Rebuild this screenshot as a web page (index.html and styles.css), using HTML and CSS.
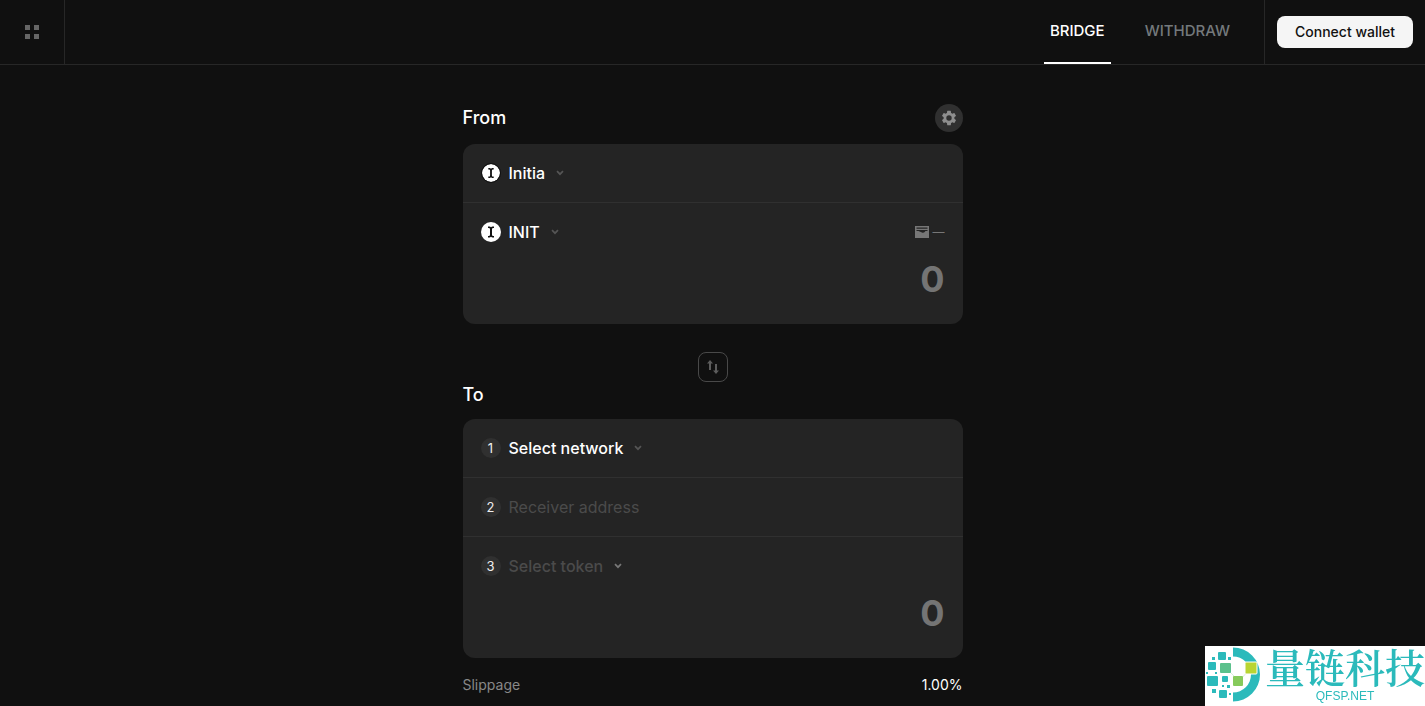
FILE: index.html
```html
<!DOCTYPE html>
<html lang="en">
<head>
    <meta charset="UTF-8">
    <meta name="viewport" content="width=device-width, initial-scale=1.0">
    <title>Bridge</title>
    <link rel="stylesheet" href="styles.css">
</head>
<body>
    <!-- Shared icons -->
    <svg class="sprite" aria-hidden="true">
        <symbol id="chevron" viewBox="0 0 8 6">
            <path d="M1 1.2l3 3 3-3" fill="none" stroke="currentColor" stroke-width="1.7"/>
        </symbol>
        <symbol id="initia" viewBox="0 0 20 20">
            <circle cx="10" cy="10" r="10" fill="#fff"/>
            <path d="M7 4.500h1.500q.8 0 1.500.7.7-.7 1.500-.7H13V6h-.8q-1.200 0-1.200 1.300v5.400q0 1.300 1.200 1.300h.8v1.500h-1.500q-.8 0-1.500-.7-.7.7-1.500.7H7V14h.8Q9 14 9 12.700V7.300Q9 6 7.800 6H7z" fill="#111"/>
        </symbol>
    </svg>

    <header class="header">
        <button class="menu" aria-label="Menu">
            <svg width="14" height="14" viewBox="0 0 14 14" fill="currentColor">
                <path d="M0 0h5v5H0zM9 0h5v5H9zM0 9h5v5H0zM9 9h5v5H9z"/>
            </svg>
        </button>
        <nav class="tabs">
            <a href="#" class="tab active">BRIDGE</a>
            <a href="#" class="tab">WITHDRAW</a>
        </nav>
        <div class="wallet">
            <button class="connect">Connect wallet</button>
        </div>
    </header>

    <main class="bridge">
        <div class="title-row">
            <h2>From</h2>
            <button class="settings" aria-label="Settings">
                <svg width="18" height="18" viewBox="0 0 24 24" fill="currentColor">
                    <path d="M19.140 12.940c.04-.3.060-.61.060-.94s-.02-.64-.07-.94l2.030-1.580a.49.490 0 0 0 .12-.61l-1.920-3.320a.49.490 0 0 0-.59-.22l-2.390.96a7 7 0 0 0-1.620-.94l-.36-2.540a.48.480 0 0 0-.48-.41h-3.840a.48.480 0 0 0-.47.410l-.36 2.540a7.200 7.200 0 0 0-1.620.94l-2.390-.96a.48.480 0 0 0-.59.220L2.740 8.870a.48.480 0 0 0 .12.610l2.030 1.580a6 6 0 0 0 0 1.880l-2.030 1.580a.49.490 0 0 0-.12.610l1.920 3.320c.12.220.370.290.590.220l2.390-.96c.5.380 1.030.7 1.620.94l.36 2.540c.05.240.240.410.480.410h3.840c.24 0 .44-.17.470-.41l.36-2.540a7 7 0 0 0 1.620-.94l2.390.96c.22.080.470 0 .59-.22l1.920-3.320a.48.480 0 0 0-.12-.61zM12 15.600a3.600 3.600 0 1 1 0-7.200 3.600 3.600 0 0 1 0 7.200z"/>
                </svg>
            </button>
        </div>

        <section class="card">
            <div class="row">
                <button class="select">
                    <svg class="coin ring" width="20" height="20"><use href="#initia"/></svg>
                    Initia
                    <svg class="chevron" width="8" height="6"><use href="#chevron"/></svg>
                </button>
            </div>
            <div class="asset">
                <div class="asset-top">
                    <button class="select">
                        <svg class="coin" width="20" height="20"><use href="#initia"/></svg>
                        INIT
                        <svg class="chevron" width="8" height="6"><use href="#chevron"/></svg>
                    </button>
                    <div class="balance">
                        <svg width="14" height="12" viewBox="0 0 14 12">
                            <path d="M0 0h14v12H0z" fill="currentColor"/>
                            <path d="M1.500 1.500h11v1.200h-11zM1.500 4h11v1H10.500Q9.500 7 7.500 6.700L3.500 5h-2z" fill="#242424"/>
                        </svg>
                        <span>—</span>
                    </div>
                </div>
                <input class="amount" type="text" inputmode="decimal" placeholder="0" aria-label="Amount to send">
            </div>
        </section>

        <button class="swap" aria-label="Swap direction">
            <svg width="14" height="14" viewBox="0 0 14 14" fill="currentColor">
                <path d="M4 0l3 3.600H5V10H3V3.600H1z"/>
                <path d="M10 14l3-3.600h-2V4H9v6.400H7z"/>
            </svg>
        </button>

        <div class="title-row to">
            <h2>To</h2>
        </div>

        <section class="card">
            <div class="row">
                <button class="select">
                    <span class="step">1</span>
                    Select network
                    <svg class="chevron" width="8" height="6"><use href="#chevron"/></svg>
                </button>
            </div>
            <div class="row">
                <label class="step" for="receiver">2</label>
                <input class="receiver" id="receiver" type="text" placeholder="Receiver address">
            </div>
            <div class="asset">
                <div class="asset-top">
                    <button class="select muted">
                        <span class="step">3</span>
                        Select token
                        <svg class="chevron" width="8" height="6"><use href="#chevron"/></svg>
                    </button>
                </div>
                <input class="amount" type="text" placeholder="0" aria-label="Amount to receive" readonly>
            </div>
        </section>

        <div class="slippage">
            <span>Slippage</span>
            <span class="value">1.00%</span>
        </div>
    </main>

    <!-- Corner logo -->
    <aside class="brand">
        <svg width="56" height="60" viewBox="0 0 56 60">
            <path d="M28 1.500a27 27 0 0 1 0 54v-9a18 18 0 0 0 0-36z" fill="#2bbabb"/>
            <path d="M21 22l12 12M34 35l12-13" stroke="#d8eeda" stroke-width="1" fill="none"/>
            <g fill="#2bbabb">
                <rect x="13" y="6" width="8" height="8" rx="1"/>
                <rect x="3" y="16" width="8" height="8" rx="1"/>
                <rect x="2" y="30" width="11" height="10" rx="1"/>
                <rect x="17" y="30" width="6" height="6" rx="1"/>
                <rect x="14" y="44" width="8" height="8" rx="1"/>
                <rect x="7" y="11" width="3" height="3"/>
                <rect x="23" y="11" width="3" height="3"/>
                <rect x="1" y="26" width="2" height="2"/>
                <rect x="10" y="26" width="2" height="2"/>
                <rect x="7" y="43" width="4" height="4"/>
                <rect x="22" y="39" width="3" height="3"/>
                <rect x="17" y="39" width="2" height="2"/>
                <rect x="24" y="47" width="2" height="2"/>
            </g>
            <rect x="15" y="17" width="11" height="10" rx="1" fill="#5bc18c"/>
            <rect x="28" y="30" width="10" height="10" rx="1" fill="#86ca5b"/>
            <rect x="40" y="16" width="12" height="12" rx="1" fill="#b9d532" stroke="#fff"/>
        </svg>
        <div class="brand-text">
            <span class="brand-name" lang="zh">量链科技</span>
            <span class="brand-site">QFSP.NET</span>
        </div>
    </aside>
</body>
</html>
```

FILE: styles.css
```css
* {
    margin: 0;
    padding: 0;
    box-sizing: border-box;
}

body {
    background: #101010;
    color: #fff;
    font-family: Inter, "Liberation Sans", sans-serif;
    font-size: 16px;
    line-height: 20px;
    overflow: hidden;
}

button,
input {
    font: inherit;
    color: inherit;
    background: none;
    border: none;
    outline: none;
}

button {
    cursor: pointer;
}

svg {
    display: block;
    flex-shrink: 0;
}

.sprite {
    position: absolute;
    width: 0;
    height: 0;
}

/* Header */
.header {
    display: flex;
    height: 65px;
    border-bottom: 1px solid #272727;
}

.menu {
    display: flex;
    align-items: center;
    justify-content: center;
    width: 65px;
    border-right: 1px solid #272727;
    color: #666;
}

.tabs {
    display: flex;
    gap: 28px;
    margin-left: auto;
    padding-right: 28px;
}

.tab {
    display: flex;
    align-items: center;
    padding: 0 6px;
    border-bottom: 2px solid transparent;
    font-size: 15px;
    font-weight: 500;
    color: #74797c;
    text-decoration: none;
}

.tab.active {
    color: #fff;
    border-color: #fff;
}

.wallet {
    display: flex;
    align-items: center;
    padding: 0 12px;
    border-left: 1px solid #272727;
}

.connect {
    height: 32px;
    padding: 0 18px;
    border-radius: 8px;
    background: #f5f5f5;
    color: #111;
    font-size: 14px;
    font-weight: 500;
}

/* Bridge form */
.bridge {
    width: 100%;
    max-width: 500px;
    margin: 0 auto;
    padding-top: 39px;
}

.title-row {
    display: flex;
    align-items: center;
    justify-content: space-between;
    height: 28px;
    margin-bottom: 12px;
}

.title-row.to {
    height: 25px;
}

h2 {
    font-size: 18px;
    font-weight: 500;
}

.settings {
    display: flex;
    align-items: center;
    justify-content: center;
    width: 28px;
    height: 28px;
    border-radius: 50%;
    background: #303030;
    color: #8e8e8e;
}

.card {
    border-radius: 12px;
    background: #242424;
}

.row {
    display: flex;
    align-items: center;
    gap: 8px;
    height: 59px;
    padding: 0 18px;
    border-bottom: 1px solid #303030;
}

.select {
    display: flex;
    align-items: center;
    gap: 8px;
    font-weight: 500;
}

.chevron {
    margin-left: 3px;
    color: #555;
}

.coin.ring {
    border: 1px solid #111;
    border-radius: 50%;
}

.step {
    width: 20px;
    height: 20px;
    border-radius: 50%;
    background: #303030;
    color: #eee;
    font-size: 13px;
    font-weight: 400;
    text-align: center;
}

.muted {
    color: #4b4b4b;
}

.muted .chevron {
    color: #777;
}

.receiver {
    flex: 1;
}

.receiver::placeholder {
    color: #4b4b4b;
    opacity: 1;
}

.asset {
    padding: 19px 18px 22px;
}

.asset-top {
    display: flex;
    align-items: center;
    justify-content: space-between;
    height: 20px;
}

.balance {
    display: flex;
    align-items: center;
    gap: 4px;
    color: #777;
    font-size: 12px;
}

.amount {
    display: block;
    width: 100%;
    height: 46px;
    margin-top: 14px;
    font-size: 36px;
    font-weight: 700;
    text-align: right;
}

.amount::placeholder {
    color: #747474;
    opacity: 1;
}

.swap {
    display: flex;
    align-items: center;
    justify-content: center;
    width: 30px;
    height: 30px;
    margin: 28px auto 0;
    border: 1px solid #494949;
    border-radius: 8px;
    color: #5c5c5c;
}

.slippage {
    display: flex;
    justify-content: space-between;
    margin-top: 17px;
    font-size: 14px;
    color: #888;
}

.slippage .value {
    color: #fff;
}

/* Corner logo */
.brand {
    position: fixed;
    right: 0;
    bottom: 0;
    display: flex;
    gap: 4px;
    background: #fff;
    color: #2bbabb;
}

.brand-text {
    display: flex;
    flex-direction: column;
    align-items: center;
}

.brand-name {
    font-family: "Noto Serif CJK SC", "Noto Sans CJK SC", serif;
    font-size: 40px;
    font-weight: 600;
    line-height: 40px;
}

.brand-site {
    margin-top: 4px;
    font-family: "Liberation Sans", Arial, sans-serif;
    font-size: 12px;
    line-height: 12px;
}
```
